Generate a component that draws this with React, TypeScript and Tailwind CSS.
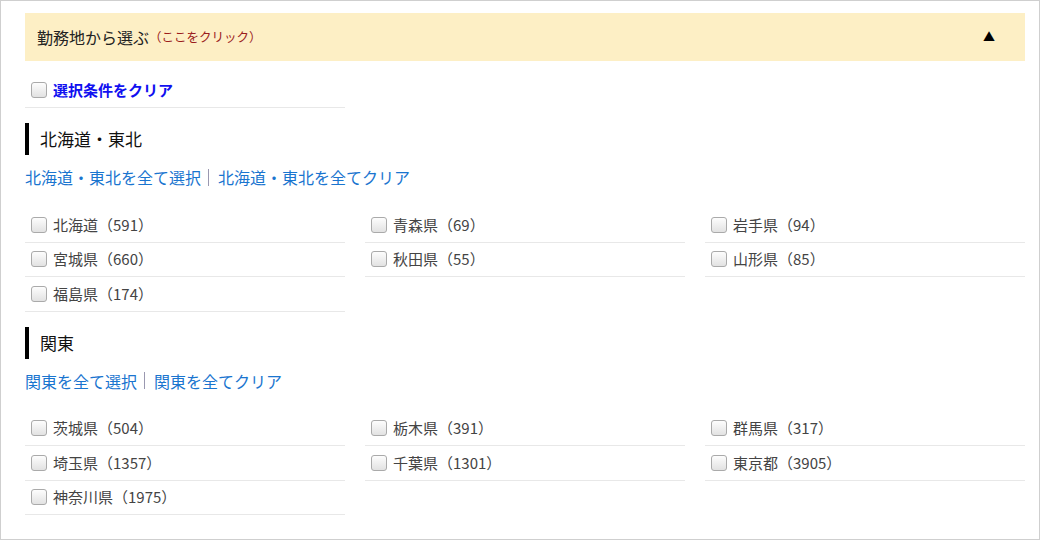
import React from 'react'

const font = { fontFamily: '"Noto Sans CJK JP", "Noto Sans", sans-serif' }

type Pref = { name: string; count: number }

const regions: { title: string; prefs: Pref[] }[] = [
  {
    title: '北海道・東北',
    prefs: [
      { name: '北海道', count: 591 },
      { name: '青森県', count: 69 },
      { name: '岩手県', count: 94 },
      { name: '宮城県', count: 660 },
      { name: '秋田県', count: 55 },
      { name: '山形県', count: 85 },
      { name: '福島県', count: 174 },
    ],
  },
  {
    title: '関東',
    prefs: [
      { name: '茨城県', count: 504 },
      { name: '栃木県', count: 391 },
      { name: '群馬県', count: 317 },
      { name: '埼玉県', count: 1357 },
      { name: '千葉県', count: 1301 },
      { name: '東京都', count: 3905 },
      { name: '神奈川県', count: 1975 },
    ],
  },
]

const Box = () => (
  <span className="inline-block h-[16px] w-[16px] shrink-0 rounded-[3px] border border-[#aaa] bg-gradient-to-b from-[#fdfdfd] to-[#e2e2e2]" />
)

const PrefRow = ({ pref }: { pref: Pref }) => (
  <label className="flex h-[34.5px] items-center gap-[6px] border-b border-[#e8e8e8] pl-[6px] text-[15px] text-[#444]">
    <Box />
    <span>
      {pref.name}（{pref.count}）
    </span>
  </label>
)

const Region = ({ title, prefs }: { title: string; prefs: Pref[] }) => (
  <section className="mt-[15px]">
    <h3 className="flex h-8 items-center border-l-4 border-black pl-[11px] text-[17px] text-[#111]">
      {title}
    </h3>
    <div className="mt-[10px] flex items-center text-[16px] leading-6 text-[#1a75cf]">
      <a className="cursor-pointer">{title}を全て選択</a>
      <span className="ml-[7px] mr-[9px] h-[17px] w-px bg-[#9a98b0]" />
      <a className="cursor-pointer">{title}を全てクリア</a>
    </div>
    <div className="mt-[19px] grid grid-cols-[320px_320px_320px] gap-x-5">
      {prefs.map(p => (
        <PrefRow key={p.name} pref={p} />
      ))}
    </div>
  </section>
)

export default function App() {
  return (
    <div
      className="h-[540px] w-[1040px] overflow-hidden border border-[#cfcfcf] bg-white pl-6 pr-[14px] pt-3"
      style={font}
    >
      <div className="flex h-[48px] items-center bg-[#fdefc5] pl-3 pr-[30px]">
        <span className="text-[16px] text-[#222]">勤務地から選ぶ</span>
        <span className="text-[12.5px] text-[#9b1c1c]">（ここをクリック）</span>
        <span className="ml-auto text-[12px] text-black">▲</span>
      </div>

      <label className="mt-3 flex h-[35px] w-[320px] items-center gap-[6px] border-b border-[#e8e8e8] pl-[6px]">
        <Box />
        <span className="text-[15px] font-bold text-[#1010f0]">選択条件をクリア</span>
      </label>

      {regions.map(r => (
        <Region key={r.title} title={r.title} prefs={r.prefs} />
      ))}
    </div>
  )
}
